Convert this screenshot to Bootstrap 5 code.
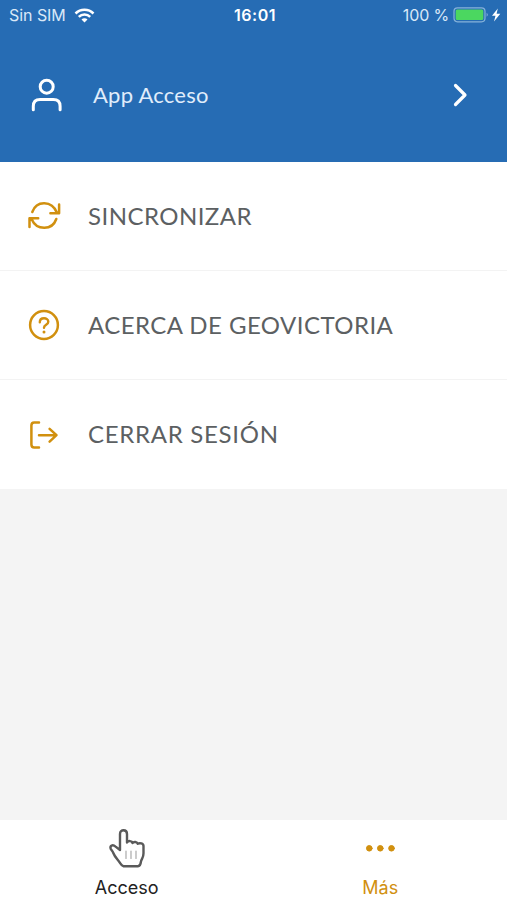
<!DOCTYPE html>
<html lang="es">
<head>
<meta charset="utf-8">
<meta name="viewport" content="width=device-width, initial-scale=1">
<title>App Acceso</title>
<link href="https://cdn.jsdelivr.net/npm/bootstrap@5.3.0/dist/css/bootstrap.min.css" rel="stylesheet">
<style>
  body { background: #f4f4f4; font-family: Lato, "Noto Sans", sans-serif; overflow: hidden; }
  svg { display: block; flex: none; fill: none; stroke: currentColor; stroke-linecap: round; stroke-linejoin: round; }
  .app-top { background: #266cb4; height: 162px; color: #fff; }
  .status { height: 30px; padding: 0 6px 0 9px; font: 16px/30px Inter, sans-serif; color: #d9e8f8; }
  .status > div { flex: 1 1 0; }
  .clock { color: #fff; font-weight: 600; letter-spacing: .5px; }
  .sim { letter-spacing: -.05px; }
  .pct { letter-spacing: -.15px; }
  .profile { height: 130px; padding: 0 39px 0 31px; color: #fff; }
  .profile-name { font-size: 22px; line-height: 30px; color: #e0edfb; margin-left: 31px; letter-spacing: .25px; }
  .menu .list-group-item { height: 109px; padding: 0 28px; border-color: #f3f3f3; color: #5c6062; border-width: 0 0 1px; }
  .menu svg { color: #d1900f; }
  .menu-label { font-size: 24px; line-height: 32px; margin-left: 27px; padding-bottom: 1px; white-space: nowrap; letter-spacing: .45px; }
  .menu-label.wide { letter-spacing: .7px; }
  .tabs { height: 80px; background: #fff; font: 18px/24px Inter, sans-serif; }
  .tabs a { color: #222; padding-top: 8px; }
  .tabs a.more { color: #d1900f; }
  .tabs span { margin-top: 8px; }
  .hand { color: #5a5a5a; }
  .hand .creases { stroke: #aaa; }
</style>
<script src="https://cdn.jsdelivr.net/npm/bootstrap@5.3.0/dist/js/bootstrap.bundle.min.js"></script>
</head>
<body class="vh-100 d-flex flex-column">
<header class="app-top">
  <div class="status d-flex">
    <div class="d-flex align-items-center"><span class="sim">Sin SIM</span>
      <svg class="ms-2" width="21" height="15" viewBox="0 0 20 15"><g stroke="#fff" stroke-width="2.5" stroke-linecap="butt"><path d="M1 5.5a12.7 12.7 0 0 1 18 0"/><path d="M4.3 8.8a8 8 0 0 1 11.4 0"/></g><path d="M7 11.4a4.2 4.2 0 0 1 6 0L10 14.5z" fill="#fff" stroke="none"/></svg>
    </div>
    <span class="clock">16:01</span>
    <div class="d-flex align-items-center justify-content-end"><span class="pct">100 %</span>
      <svg class="ms-1" width="48" height="18" viewBox="0 0 48 18"><rect x="1" y="1.8" width="31" height="14" rx="3.5" stroke="#86b2d9" stroke-width="1.2"/><rect x="2.7" y="3.5" width="27.6" height="10.6" rx="1.5" fill="#4bd760" stroke="none"/><path d="M33.6 6.8q2.4 2 0 4z" fill="#86b2d9" stroke="none"/><path d="M44.8 2.5 39 9.7h3.5L41 15.4l6.3-7.7h-3.7z" fill="#fff" stroke="none"/></svg>
    </div>
  </div>
  <div class="profile d-flex align-items-center">
    <svg width="31" height="34" viewBox="0 0 31 34" stroke-width="3"><circle cx="15.7" cy="8.7" r="6.5"/><path d="M2.3 31.7v-3.4q0-6.8 6.8-6.8h13.2q6.8 0 6.8 6.8v3.4"/></svg>
    <span class="profile-name">App Acceso</span>
    <svg class="ms-auto" width="15" height="24" viewBox="0 0 15 24" stroke-width="3.2"><path d="m2.5 2.5 9.5 9.5-9.5 9.5"/></svg>
  </div>
</header>
<div class="menu list-group list-group-flush">
  <a class="list-group-item d-flex align-items-center" href="#">
    <svg width="33" height="30" viewBox="0 0 33 30" stroke-width="2.5" stroke-linejoin="miter"><path d="M4.3 11C8.5-.7 23.8-.8 29 11.8M31.1 3.5v8.7h-8.7M28.3 18C24.2 29.6 8.8 30 3.5 18M1.5 26v-8.7h8.7"/></svg>
    <span class="menu-label">SINCRONIZAR</span>
  </a>
  <a class="list-group-item d-flex align-items-center" href="#">
    <svg width="33" height="32" viewBox="0 0 33 32" stroke-width="2.5"><circle cx="16" cy="16" r="13.9"/><path d="M11.8 13.2c0-5.4 8.5-5.1 8.5-.4 0 3.3-4.3 2.8-4.3 6" stroke-width="2.4"/><circle cx="16" cy="23" r="1.5" fill="currentColor" stroke="none"/></svg>
    <span class="menu-label">ACERCA DE GEOVICTORIA</span>
  </a>
  <a class="list-group-item d-flex align-items-center" href="#">
    <svg width="33" height="30" viewBox="0 0 33 30" stroke-width="2.5"><path d="M11 2.5H6.2Q3.4 2.5 3.4 5.5v19q0 3 2.8 3H11M11 15.2h17M21.6 8.8l6.9 6.4-6.9 6.4"/></svg>
    <span class="menu-label wide">CERRAR SESIÓN</span>
  </a>
</div>
<nav class="tabs mt-auto d-flex text-center">
  <a class="col-6 text-decoration-none d-flex flex-column align-items-center" href="#">
    <svg class="hand" width="38" height="40" viewBox="0 0 38 40" stroke-width="2.4"><path d="M12 22V6c0-5 7-5 7 0v8.6c1-2.3 5-1.9 5.5.4 1.2-1.7 4.7-1.3 5.2.8 2-1.2 5.8-.5 5.8 2.2v7.3c0 4.5-1.8 5-2.6 8.5q-.4 4.2-3 4.4H15.5q-1.6-.2-3.2-2.8c-2.3-3.7-5.4-6.2-7-10.4-.8-2-1.8-2.5-2.5-4-1.4-3.6 2-4.8 4.8-2.4L12 22"/><path class="creases" d="M18 23v7.5M23 23v7.5M28 23v7.5" stroke-width="1.2"/></svg>
    <span>Acceso</span>
  </a>
  <a class="more col-6 text-decoration-none d-flex flex-column align-items-center" href="#">
    <svg width="32" height="40" viewBox="0 0 32 40"><g fill="currentColor"><circle cx="5.3" cy="20.3" r="2.8"/><circle cx="16.3" cy="20.3" r="2.8"/><circle cx="27.5" cy="20.3" r="2.8"/></g></svg>
    <span>Más</span>
  </a>
</nav>
</body>
</html>
